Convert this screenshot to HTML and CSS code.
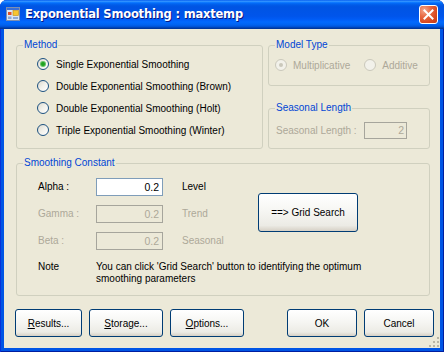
FILE: index.html
```html
<!DOCTYPE html>
<html>
<head>
<meta charset="utf-8">
<link rel="stylesheet" href="styles.css">
</head>
<body>
<div class="window">
  <div class="titlebar">
    <svg class="app-icon" width="14" height="14" viewBox="0 0 14 14">
      <rect x="0.5" y="0.5" width="13" height="13" fill="#DCE6F4" stroke="#7D8FB0"/>
      <rect x="1" y="1" width="12" height="2" fill="#3A6FD8"/>
      <rect x="7" y="3.5" width="5.5" height="5" fill="#F7C531" stroke="#C08A10" stroke-width="0.6"/>
      <rect x="2" y="5" width="3.5" height="3" fill="#E0502A"/>
      <rect x="2" y="9.5" width="3.5" height="2.5" fill="#8FA9D6"/>
      <rect x="7" y="10" width="5" height="2" fill="#8FA9D6"/>
    </svg>
    <span class="title">Exponential Smoothing : maxtemp</span>
    <span class="close">
      <svg width="11" height="11" viewBox="0 0 11 11"><path d="M1.5 1.5 L9.5 9.5 M9.5 1.5 L1.5 9.5" stroke="#fff" stroke-width="2" stroke-linecap="square"/></svg>
    </span>
  </div>
  <div class="client">
    <div class="top-row">
      <div class="group method">
        <span class="legend">Method</span>
        <div class="radio"><span class="dot checked"></span>Single Exponential Smoothing</div>
        <div class="radio"><span class="dot"></span>Double Exponential Smoothing (Brown)</div>
        <div class="radio"><span class="dot"></span>Double Exponential Smoothing (Holt)</div>
        <div class="radio"><span class="dot"></span>Triple Exponential Smoothing (Winter)</div>
      </div>
      <div class="right-col">
        <div class="group model">
          <span class="legend">Model Type</span>
          <div class="radio-row">
            <div class="radio disabled"><span class="dot checked"></span>Multiplicative</div>
            <div class="radio disabled"><span class="dot"></span>Additive</div>
          </div>
        </div>
        <div class="group seasonal">
          <span class="legend">Seasonal Length</span>
          <div class="field-row">
            <span class="dim">Seasonal Length :</span>
            <span class="textbox off small">2</span>
          </div>
        </div>
      </div>
    </div>
    <div class="group smoothing">
      <span class="legend">Smoothing Constant</span>
      <div class="smooth-grid">
        <span class="lbl">Alpha :</span><span class="textbox">0.2</span><span class="lbl word">Level</span>
        <div class="btn grid-btn">==&gt; Grid Search</div>
        <span class="lbl dim">Gamma :</span><span class="textbox off">0.2</span><span class="lbl word dim">Trend</span>
        <span class="lbl dim">Beta :</span><span class="textbox off">0.2</span><span class="lbl word dim">Seasonal</span>
      </div>
      <div class="note-row">
        <span class="note-label">Note</span>
        <span class="note-text">You can click 'Grid Search' button to identifying the optimum<br>smoothing parameters</span>
      </div>
    </div>
    <div class="buttons">
      <div class="btn-group">
        <div class="btn w67"><u>R</u>esults...</div>
        <div class="btn w74"><u>S</u>torage...</div>
        <div class="btn w74"><u>O</u>ptions...</div>
      </div>
      <div class="btn-group">
        <div class="btn w70">OK</div>
        <div class="btn w70">Cancel</div>
      </div>
    </div>
    <svg class="grip" width="10" height="10" viewBox="0 0 10 10">
      <g fill="#B9B6A6">
        <rect x="8" y="0" width="2" height="2"/>
        <rect x="4" y="4" width="2" height="2"/><rect x="8" y="4" width="2" height="2"/>
        <rect x="0" y="8" width="2" height="2"/><rect x="4" y="8" width="2" height="2"/><rect x="8" y="8" width="2" height="2"/>
      </g>
    </svg>
  </div>
</div>
</body>
</html>
```
FILE: styles.css
```css
html, body {
  margin: 0;
  padding: 0;
  background: #ffffff;
}
body {
  width: 444px;
  height: 352px;
  overflow: hidden;
  font-family: "Liberation Sans", Arial, sans-serif;
  font-size: 10px;
  color: #000;
}
.window {
  width: 444px;
  height: 352px;
  box-sizing: border-box;
  display: flex;
  flex-direction: column;
  background: #0055E5;
  border-radius: 7px 7px 0 0;
  box-shadow: inset 1px 0 0 #0831D9, inset -1px 0 0 #001EA0, inset 0 -1px 0 #001EA0;
  position: relative;
}
.titlebar {
  height: 29px;
  flex: none;
  display: flex;
  align-items: center;
  padding: 0 6px 0 6px;
  border-radius: 7px 7px 0 0;
  background: linear-gradient(#0058EE 0%, #3593FF 4%, #288EFF 6%, #127DFF 8%, #036FFC 10%, #0262EE 14%, #0057E5 20%, #0054E3 24%, #0055EB 56%, #005BF5 66%, #026AFE 76%, #0062EF 86%, #0052D6 92%, #0040AB 96%, #003092 100%);
}
.app-icon {
  flex: none;
  margin-right: 5px;
  margin-top: -1px;
}
.title {
  flex: 1;
  color: #fff;
  font-family: "DejaVu Sans", sans-serif;
  font-weight: bold;
  font-size: 11.5px;
  letter-spacing: -0.2px;
  text-shadow: 1px 1px 0 #0A1883;
  margin-top: -1px;
}
.close {
  width: 19px;
  height: 19px;
  box-sizing: border-box;
  border: 1px solid #fff;
  border-radius: 3px;
  background: radial-gradient(circle at 25% 25%, #F4A88E 0%, #E86A45 35%, #D8481F 70%, #C03A16 100%);
  display: flex;
  align-items: center;
  justify-content: center;
  margin-top: -1px;
}
.client {
  flex: 1;
  margin: 0 4px 4px;
  background: #ECE9D8;
  padding: 16px 10px 11px 12px;
  display: flex;
  flex-direction: column;
  position: relative;
}
.top-row {
  display: flex;
  gap: 5px;
  height: 104px;
}
.group {
  position: relative;
  box-sizing: border-box;
  border: 1px solid #D0D0BF;
  border-radius: 3px;
}
.legend {
  position: absolute;
  top: -7px;
  left: 6px;
  padding: 0 1px;
  background: #ECE9D8;
  color: #0046D5;
  line-height: 12px;
}
.method {
  width: 247px;
  padding: 7px 0 0 20px;
}
.radio {
  height: 22px;
  display: flex;
  align-items: center;
  white-space: nowrap;
}
.dot {
  width: 12px;
  height: 12px;
  box-sizing: border-box;
  border-radius: 50%;
  border: 1px solid #1C5180;
  background: linear-gradient(135deg, #DCD9CE 0%, #F2F1EB 50%, #FFFFFF 100%);
  margin-right: 7px;
  display: flex;
  align-items: center;
  justify-content: center;
  flex: none;
}
.dot.checked::after {
  content: "";
  width: 4px;
  height: 4px;
  border-radius: 50%;
  background: #21A121;
  box-shadow: 0 0 0 1px #62C462;
}
.radio.disabled {
  color: #ACA899;
}
.radio.disabled .dot {
  border-color: #CAC8BB;
  background: #F2F1EA;
  margin-right: 6px;
}
.radio.disabled .dot.checked::after {
  background: #CAC8BB;
  box-shadow: none;
}
.right-col {
  width: 162px;
  display: flex;
  flex-direction: column;
  justify-content: space-between;
}
.model {
  height: 41px;
  padding: 8px 0 0 6px;
}
.radio-row {
  display: flex;
  gap: 14px;
}
.seasonal {
  height: 41px;
  padding: 13px 0 0 7px;
}
.field-row {
  display: flex;
  align-items: center;
  justify-content: space-between;
  width: 131px;
}
.dim {
  color: #ACA899;
}
.textbox {
  box-sizing: border-box;
  height: 18px;
  border: 1px solid #7F9DB9;
  background: #fff;
  text-align: right;
  padding-right: 3px;
  line-height: 16px;
  font-size: 10.5px;
}
.textbox.off {
  border-color: #A6A59C;
  background: #ECE9D8;
  color: #ACA899;
}
.textbox.small {
  width: 43px;
  height: 17px;
  line-height: 15px;
  padding-right: 2px;
}
.smoothing {
  margin-top: 14px;
  height: 133px;
  padding: 14px 0 0 21px;
}
.smooth-grid {
  display: grid;
  grid-template-columns: 58px 67px 95px 100px;
  grid-template-rows: 18px 18px 18px;
  row-gap: 9px;
}
.lbl {
  line-height: 18px;
  white-space: nowrap;
}
.word {
  padding-left: 19px;
}
.grid-btn {
  grid-column: 4;
  grid-row: 1 / 4;
  align-self: center;
  width: 100px;
  height: 39px;
  margin-top: -3px;
}
.note-row {
  display: flex;
  margin-top: 11px;
  line-height: 12px;
}
.note-label {
  width: 58px;
  flex: none;
}
.btn {
  box-sizing: border-box;
  border: 1px solid #003C74;
  border-radius: 3px;
  background: linear-gradient(#FFFFFF 0%, #F6F6F3 45%, #ECEBE5 85%, #D6D0C5 100%);
  display: flex;
  align-items: center;
  justify-content: center;
  white-space: nowrap;
}
.buttons {
  margin: 13px -4px 0 -1px;
  height: 28px;
  display: flex;
  justify-content: space-between;
}
.btn-group {
  display: flex;
  gap: 7px;
}
.btn-group .btn {
  height: 28px;
}
.w67 { width: 67px; }
.w70 { width: 70px; }
.w74 { width: 74px; }
.grip {
  position: absolute;
  right: 1px;
  bottom: 1px;
}
```
